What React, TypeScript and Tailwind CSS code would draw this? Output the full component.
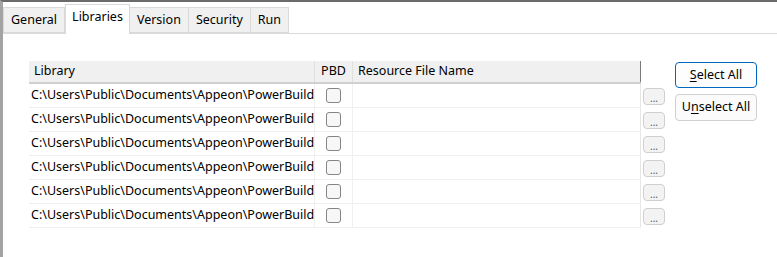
import React from "react";

const rows = Array.from({ length: 6 }, (_, i) => i);
// path is clipped by the column in the original dialog
const libPath = "C:\\Users\\Public\\Documents\\Appeon\\PowerBuild";

function Tab({ label, active }: { label: string; active?: boolean }) {
  return active ? (
    <div className="h-[30px] px-[6px] bg-white border border-b-0 border-[#d9d9d9] -mb-px flex items-start pt-[3px] relative z-10">
      {label}
    </div>
  ) : (
    <div className="h-[26px] px-[7px] bg-[#f0f0f0] border border-[#d9d9d9] border-l-0 first:border-l flex items-center">
      {label}
    </div>
  );
}

export default function App() {
  return (
    <div
      className="w-[777px] h-[257px] bg-white border-t-2 border-t-[#6b6b6b] border-l-[3px] border-l-[#a3a3a3] text-[12.5px] text-black overflow-hidden"
      style={{ fontFamily: '"Noto Sans", "Open Sans", sans-serif' }}
    >
      {/* tab strip */}
      <div className="h-[32px] flex items-end border-b border-[#dadada]">
        <Tab label="General" />
        <Tab label="Libraries" active />
        <Tab label="Version" />
        <Tab label="Security" />
        <Tab label="Run" />
      </div>

      {/* panel */}
      <div className="flex pl-[26px] pt-[27px]">
        <div className="w-[612px]">
          <div className="flex h-[23px] bg-[#f0f0f0] border-b-2 border-[#d0d0d0]">
            <div className="w-[286px] pl-[5px] flex items-center border-r border-[#e0e0e0]">Library</div>
            <div className="w-[38px] flex items-center justify-center border-r border-[#e0e0e0]">PBD</div>
            <div className="flex-1 pl-[5px] flex items-center border-r border-[#7a7a7a]">Resource File Name</div>
          </div>
          {rows.map((r) => (
            <div key={r} className="flex h-[24px] border-b border-[#f0f0f0]">
              <div className="w-[286px] pl-[2px] flex items-center overflow-hidden whitespace-nowrap border-r border-[#f0f0f0]">
                {libPath}
              </div>
              <div className="w-[38px] flex items-center justify-center border-r border-[#f0f0f0]">
                <div className="w-[15px] h-[15px] rounded-[3px] border border-[#858585] bg-[#f7f7f7]" />
              </div>
              <div className="flex-1 border-r border-[#e6e6e6]" />
            </div>
          ))}
        </div>

        <div className="pt-[25px] ml-[2px] flex flex-col">
          {rows.map((r) => (
            <div key={r} className="h-[24px] flex items-start pt-[2px]">
              <button className="w-[22px] h-[17px] rounded-[4px] border border-[#cfcfcf] bg-[#f3f3f3] text-[10px] leading-[10px] text-[#555] pt-[3px]">
                ...
              </button>
            </div>
          ))}
        </div>

        <div className="ml-[10px] pt-px flex flex-col gap-[6px]">
          <button className="w-[82px] h-[26px] rounded-[4px] border border-[#0067c0] bg-[#fdfdfd]">
            <span className="underline underline-offset-2">S</span>elect All
          </button>
          <button className="w-[82px] h-[27px] rounded-[4px] border border-[#d0d0d0] bg-[#fbfbfb]">
            U<span className="underline underline-offset-2">n</span>select All
          </button>
        </div>
      </div>
    </div>
  );
}
